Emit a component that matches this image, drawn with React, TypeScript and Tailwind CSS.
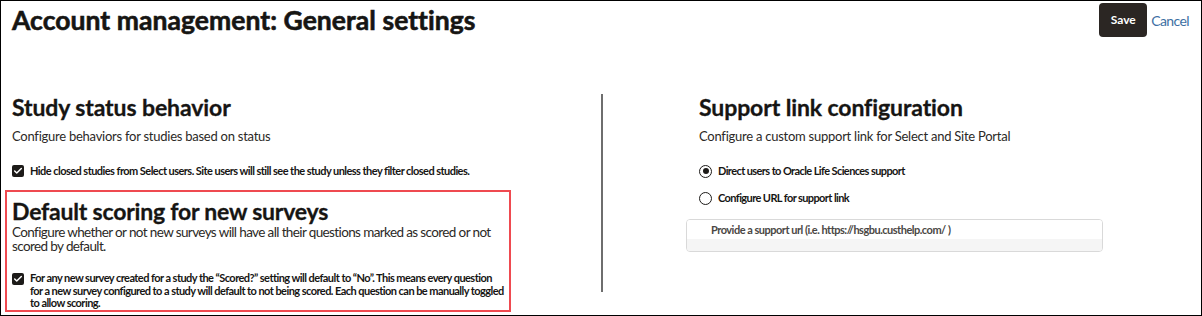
import { Check } from "lucide-react";

function CheckBox() {
  return (
    <span className="mt-[1px] flex h-[12px] w-[12px] shrink-0 items-center justify-center rounded-[2px] bg-[#1d1b19]">
      <Check className="h-[10px] w-[10px] text-white" strokeWidth={3.5} />
    </span>
  );
}

function Radio({ checked }: { checked: boolean }) {
  return (
    <span className="flex h-[13px] w-[13px] shrink-0 items-center justify-center rounded-full border border-[#1d1b19] bg-white">
      {checked && <span className="h-[6px] w-[6px] rounded-full bg-[#1d1b19]" />}
    </span>
  );
}

export default function App() {
  return (
    <div className="h-[316px] w-[1202px] overflow-hidden border border-black bg-white font-['Lato',sans-serif] text-[#161513]">
      {/* Header */}
      <div className="flex items-start justify-between pl-[11px] pr-[12px] pt-[2px]">
        <h1 className="mt-[1px] text-[26.5px] font-bold leading-[32px] tracking-[0.05px] [-webkit-text-stroke:0.6px_#161513]">
          Account management: General settings
        </h1>
        <div className="flex items-center gap-[4px]">
          <button className="h-[34px] w-[48px] rounded-[4px] bg-[#2b2623] text-[12px] font-bold text-white">
            Save
          </button>
          <span className="text-[14px] tracking-[-0.6px] text-[#3d6fa3]">Cancel</span>
        </div>
      </div>

      <div className="mt-[56px] flex">
        {/* Left column */}
        <div className="w-[600px] pl-[4px]">
          <div className="pl-[7px]">
            <h2 className="text-[23px] font-bold leading-[28px] tracking-[-0.1px] [-webkit-text-stroke:0.3px_#161513]">
              Study status behavior
            </h2>
            <p className="mt-[7px] text-[13px] leading-[16px] tracking-[-0.25px] text-[#2b2926]">
              Configure behaviors for studies based on status
            </p>
            <label className="mt-[20px] flex items-start gap-[6px]">
              <CheckBox />
              <span className="text-[11px] font-bold leading-[14px] tracking-[-0.55px]">
                Hide closed studies from Select users. Site users will still see the study unless they filter closed
                studies.
              </span>
            </label>
          </div>

          <div className="mt-[12px] w-[506px] border-2 border-[#ef4a50] pb-0 pl-[5px] pr-[2px] pt-[6px]">
            <h2 className="text-[23px] font-bold leading-[26px] tracking-[-0.2px] [-webkit-text-stroke:0.3px_#161513]">
              Default scoring for new surveys
            </h2>
            <p className="mt-[1px] text-[13.5px] leading-[14px] tracking-[-0.62px] text-[#2b2926]">
              Configure whether or not new surveys will have all their questions marked as scored or not scored by
              default.
            </p>
            <label className="mt-[19px] flex items-start gap-[6px] pr-[2px]">
              <CheckBox />
              <span className="text-[11px] font-bold leading-[12.5px] tracking-[-0.55px]">
                For any new survey created for a study the “Scored?” setting will default to “No”. This means every
                question for a new survey configured to a study will default to not being scored. Each question can be
                manually toggled to allow scoring.
              </span>
            </label>
          </div>
        </div>

        {/* Divider */}
        <div className="mt-[1px] h-[198px] w-[2px] bg-[#6e6e6e]" />

        {/* Right column */}
        <div className="flex-1 pl-[83px]">
          <div className="pl-[13px]">
            <h2 className="text-[23px] font-bold leading-[28px] tracking-[-0.1px] [-webkit-text-stroke:0.3px_#161513]">
              Support link configuration
            </h2>
            <p className="mt-[7px] text-[13px] leading-[16px] tracking-[-0.25px] text-[#2b2926]">
              Configure a custom support link for Select and Site Portal
            </p>
            <label className="mt-[20px] flex items-center gap-[6px]">
              <Radio checked />
              <span className="text-[11px] font-bold leading-[14px] tracking-[-0.6px]">
                Direct users to Oracle Life Sciences support
              </span>
            </label>
            <label className="mt-[13px] flex items-center gap-[6px]">
              <Radio checked={false} />
              <span className="text-[11px] font-bold leading-[14px] tracking-[-0.6px]">
                Configure URL for support link
              </span>
            </label>
          </div>
          <div className="mt-[14px] h-[33px] w-[417px] overflow-hidden rounded-[4px] border border-[#d9d9d9]">
            <div className="h-[19px] bg-white pl-[24px] pt-[3px] text-[11px] font-bold leading-[14px] tracking-[-0.5px] text-[#4a4744]">
              Provide a support url (i.e. https://hsgbu.custhelp.com/ )
            </div>
            <div className="h-[12px] bg-[#f5f5f5]" />
          </div>
        </div>
      </div>
    </div>
  );
}
